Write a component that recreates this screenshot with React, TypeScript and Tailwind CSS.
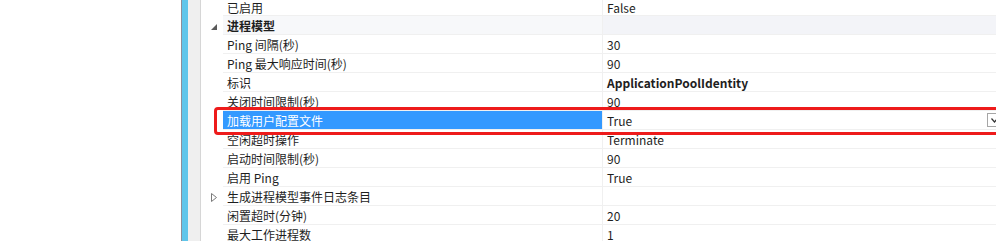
import React from "react";

type Row = {
  name: string;
  value?: string;
  kind?: "category" | "collapsed" | "selected";
  bold?: boolean;
};

const rows: Row[] = [
  { name: "已启用", value: "False" },
  { name: "进程模型", kind: "category" },
  { name: "Ping 间隔(秒)", value: "30" },
  { name: "Ping 最大响应时间(秒)", value: "90" },
  { name: "标识", value: "ApplicationPoolIdentity", bold: true },
  { name: "关闭时间限制(秒)", value: "90" },
  { name: "加载用户配置文件", value: "True", kind: "selected" },
  { name: "空闲超时操作", value: "Terminate" },
  { name: "启动时间限制(秒)", value: "90" },
  { name: "启用 Ping", value: "True" },
  { name: "生成进程模型事件日志条目", kind: "collapsed" },
  { name: "闲置超时(分钟)", value: "20" },
  { name: "最大工作进程数", value: "1" },
];

const Expander = ({ kind }: { kind?: Row["kind"] }) => {
  if (kind === "category") {
    return (
      <svg width="6" height="6" viewBox="0 0 6 6" className="mt-[1px]">
        <path d="M6 0 L6 6 L0 6 Z" fill="#5a5a5a" />
      </svg>
    );
  }
  if (kind === "collapsed") {
    return (
      <svg width="6" height="9" viewBox="0 0 6 9">
        <path d="M0.5 0.5 L5.5 4.5 L0.5 8.5 Z" fill="none" stroke="#7a7a7a" strokeWidth="1" />
      </svg>
    );
  }
  return null;
};

const GridRow = ({ row, first }: { row: Row; first?: boolean }) => {
  const isCat = row.kind === "category";
  const isSel = row.kind === "selected";
  const h = first ? "h-[16px]" : "h-[19px] pt-[2px]";
  return (
    <div className={`flex ${first ? "h-[16px]" : "h-[19px]"}`}>
      <div className={`flex w-[22px] shrink-0 items-center justify-end pr-[6px] ${h}`}>
        <Expander kind={row.kind} />
      </div>
      <div
        className={`flex w-[379px] shrink-0 items-center border-b border-[#f0f0f0] pl-[4px] ${h} ${
          isSel ? "bg-[#3399ff] text-white" : isCat ? "bg-[#f7f8fa] font-bold text-[#1e1e1e]" : "text-[#1e1e1e]"
        }`}
      >
        {row.name}
      </div>
      <div className="w-px shrink-0 bg-[#f0f0f0]" />
      <div
        className={`flex min-w-0 flex-1 items-center border-b border-[#f0f0f0] pl-[4px] text-[#1e1e1e] ${h} ${
          isCat ? "bg-[#f3f4f8]" : ""
        } ${row.bold ? "font-bold" : ""}`}
      >
        <span>{row.value}</span>
        {isSel && (
          <div className="-mr-[5px] -mt-[2px] ml-auto flex h-[14px] w-[14px] shrink-0 items-center justify-center border border-[#a6a6a6] bg-white">
            <svg width="7" height="5" viewBox="0 0 7 5">
              <path d="M0.5 0.5 L3.5 4 L6.5 0.5" fill="none" stroke="#333" strokeWidth="1.2" />
            </svg>
          </div>
        )}
      </div>
    </div>
  );
};

export default function App() {
  return (
    <div className="relative flex h-[241px] w-[996px] overflow-hidden bg-white font-['Noto_Sans_CJK_SC',sans-serif] text-[12px]">
      <div className="w-[181px] shrink-0 bg-white" />
      <div className="w-px shrink-0 bg-[#8c8d99]" />
      <div className="w-[6px] shrink-0 bg-[#5fc5ea]" />
      <div className="w-[12px] shrink-0 bg-[#efefef]" />
      <div className="w-px shrink-0 bg-[#d6d6d6]" />
      <div className="flex min-w-0 flex-1 flex-col">
        {rows.map((r, i) => (
          <GridRow key={i} row={r} first={i === 0} />
        ))}
      </div>
      <div className="pointer-events-none absolute left-[214px] top-[107px] h-[28px] w-[800px] rounded-[4px] border-[3px] border-[#ee1b1b]" />
    </div>
  );
}
